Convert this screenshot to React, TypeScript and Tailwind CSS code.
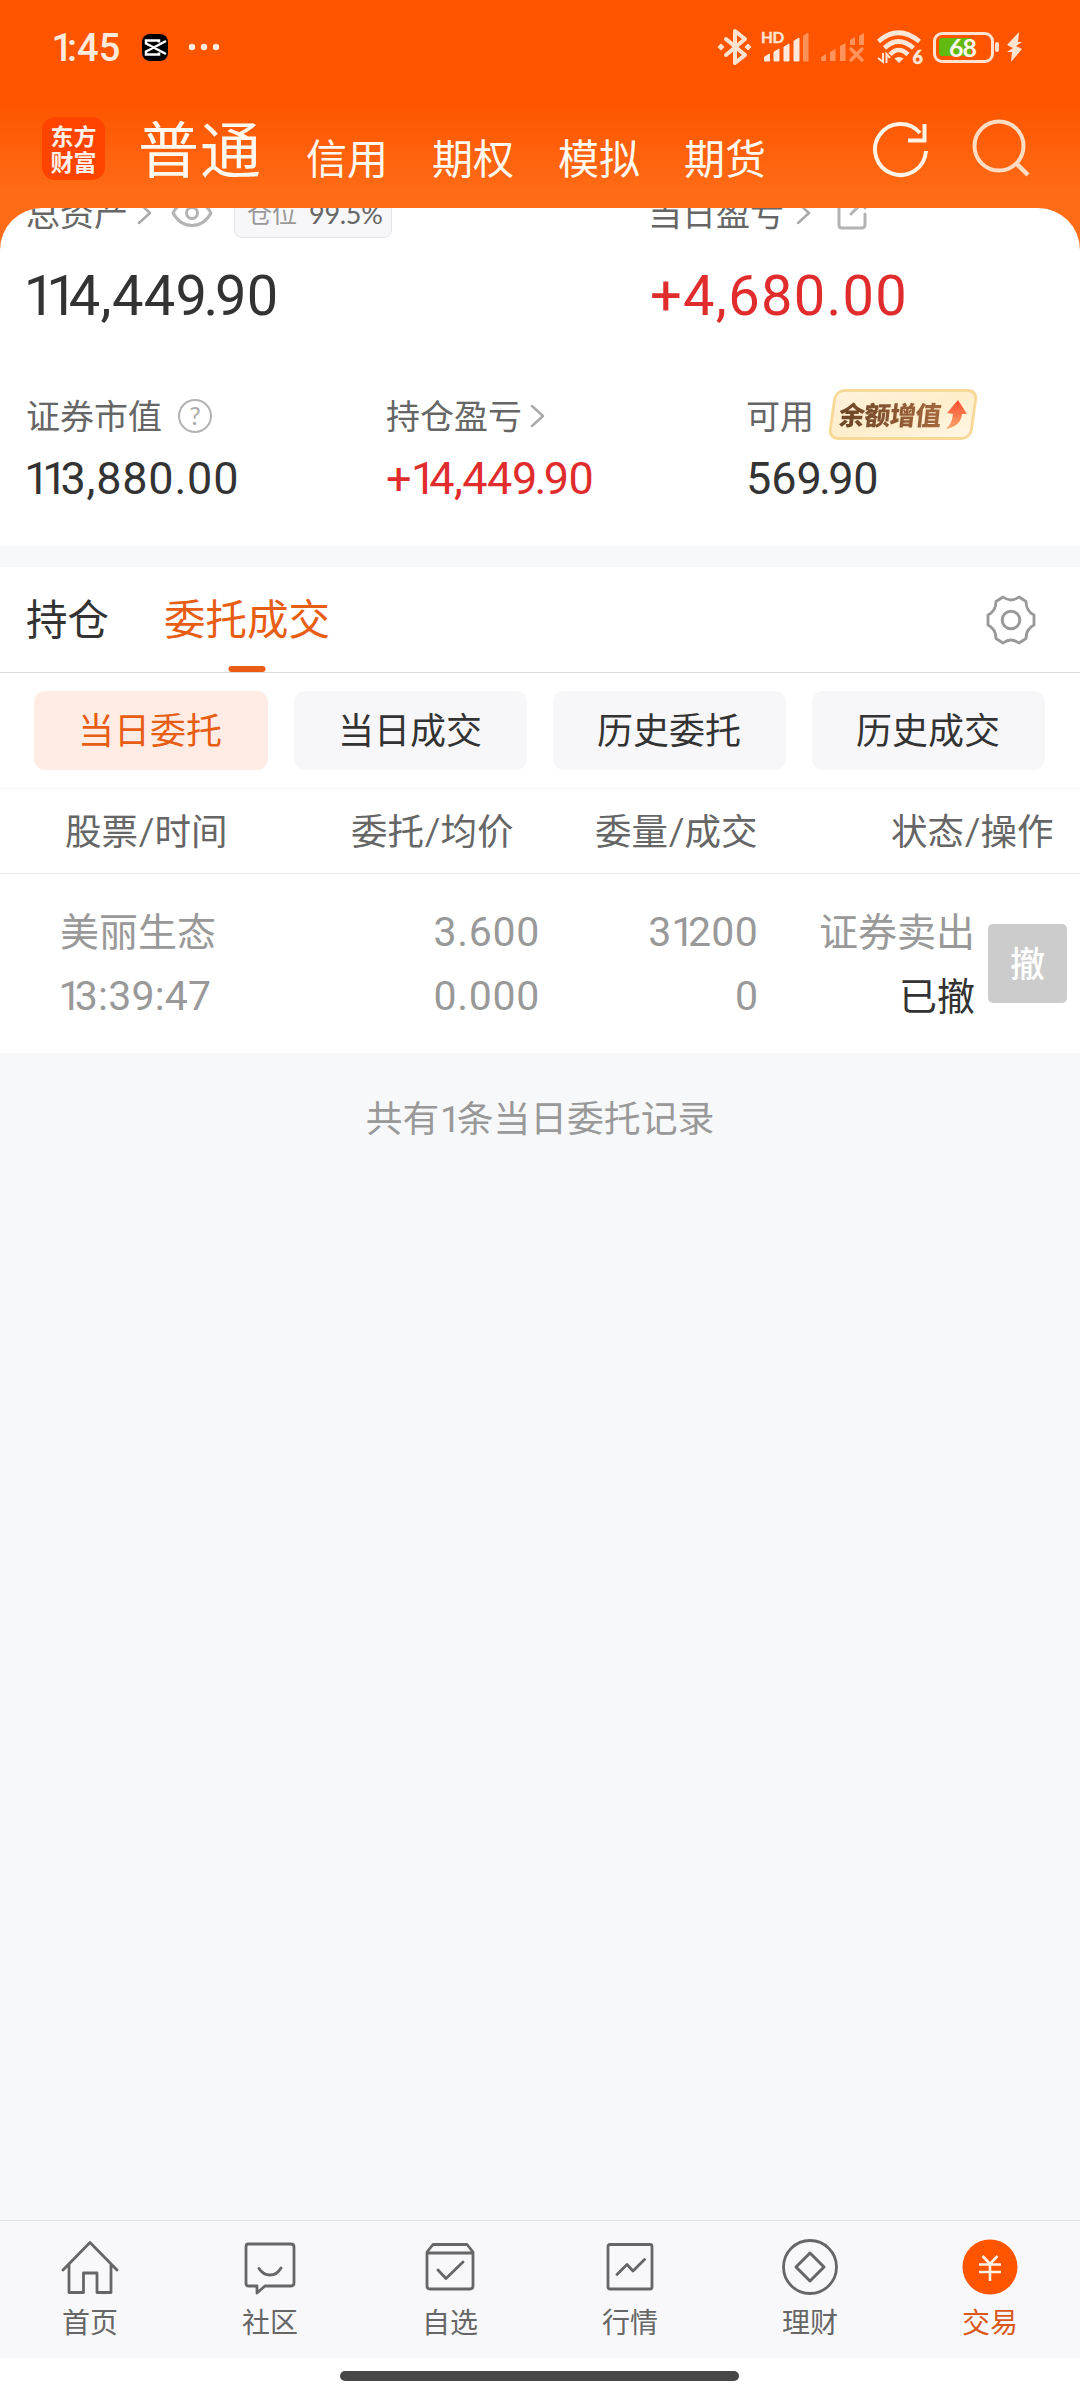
import type { ReactNode } from "react";

const stroke = { fill: "none", strokeLinecap: "round", strokeLinejoin: "round" } as const;

/** A number in proportional figures: "1" and the pairs round a "9." are set tighter. */
function Figure({ value, className = "" }: { value: string; className?: string }) {
  return (
    <span className={`font-['Roboto','Noto_Sans_CJK_SC',sans-serif] ${className}`}>
      {(value.match(/1|9\.(?=9)|[^19]+|9/g) ?? []).map((part, i) => (
        <span
          key={i}
          className={part === "1" ? (i === 0 ? "-ml-[0.04em] tracking-[-0.16em]" : "tracking-[-0.16em]") : part === "9." ? "tracking-[-0.06em]" : ""}
        >
          {part}
        </span>
      ))}
    </span>
  );
}

function Chevron({ className = "" }: { className?: string }) {
  return (
    <svg className={className} width="16" height="26" viewBox="0 0 16 26" {...stroke} stroke="#aaa" strokeWidth="2.5">
      <path d="M2 3 13 13 2 23" />
    </svg>
  );
}

function StatusBar() {
  return (
    <div className="flex h-[94px] items-center pl-[53px]">
      <Figure value="1:45" className="w-[89px] pt-[1px] text-[38px] font-medium leading-none text-[#ffeadb]" />
      <svg width="26" height="27" viewBox="0 0 26 27">
        <rect width="26" height="27" rx="8" fill="#000" />
        <path d="M24 7 8 15.500M24 20 8 11.500M17 8.500V6.500H4V9.500L9 12M17 18.500V20.500H4V17.500L9 15" fill="none" stroke="#fff" strokeWidth="2.500" />
      </svg>
      <svg className="ml-[20px]" width="32" height="8" viewBox="0 0 32 8" fill="#ffeadb">
        <circle cx="4" cy="4" r="3.200" />
        <circle cx="16" cy="4" r="3.200" />
        <circle cx="28" cy="4" r="3.200" />
      </svg>
      <div className="ml-auto mr-[57px] flex items-center">
        <svg width="36" height="40" viewBox="0 0 36 40" {...stroke} stroke="#ffe3d0" strokeWidth="4">
          <path d="M9 12 28 28 18 36V4L28 12 9 28" />
          <path d="M4 17.500 6.500 20 4 22.500 1.500 20ZM31 17.500 33.500 20 31 22.500 28.500 20Z" fill="#ffe3d0" strokeWidth="1.500" />
        </svg>
        <div className="relative ml-[9px] h-[40px] w-[50px]">
          <span className="absolute left-[-1px] top-[3px] text-[15.500px] font-bold leading-none tracking-[-0.5px] text-[#ffe3d0] [-webkit-text-stroke:0.400px_#ffe3d0]">HD</span>
          <svg width="50" height="40" viewBox="0 0 50 40" fill="#ffe9dc">
            <path d="M2.500 34V30L7.500 27V34ZM12 34V25L17 22V34ZM22 34V20L27 17V34ZM32 34V14L37 11V34Z" stroke="#ffe9dc" strokeLinejoin="round" />
            <path d="M41.500 34V9L46 6V34Z" opacity=".4" stroke="#ffe9dc" strokeLinejoin="round" />
          </svg>
        </div>
        <svg className="ml-[8px]" width="48" height="40" viewBox="0 0 48 40" fill="#ff935c">
          <path d="M1 34V30L6 27V34ZM10 34V25L15.500 22V34ZM20 34V19L25.500 16V34ZM30 18V13L35 10V18ZM39 18V9L44 6V18Z" />
          <path d="M31 22 42 33M42 22 31 33" stroke="#ff935c" strokeWidth="3.500" strokeLinecap="round" />
        </svg>
        <div className="relative ml-[8px] h-[40px] w-[46px]">
          <svg width="46" height="40" viewBox="0 0 46 40" fill="none" stroke="#ffe6d6" strokeWidth="4.600">
            <path d="M2.500 14.500Q22-3 43.500 14.500M8.500 21Q22 8 37.500 21M14 27.500Q22.500 18.500 32 27.500" />
            <path d="M19 31.500Q22.500 29.500 27 31.500L23 35.500Z" fill="#ffe6d6" strokeWidth="1" />
            <path d="M7 26V35L2 31M10.500 36V27L14 31" strokeWidth="2" />
          </svg>
          <span className="absolute bottom-[1px] right-[-1px] text-[18px] font-black leading-none text-[#ffe6d6] [-webkit-text-stroke:0.500px_#ffe6d6]">6</span>
        </div>
        <div className="relative ml-[11px] h-[31px] w-[67px]">
          <svg width="67" height="31" viewBox="0 0 67 31">
            <rect x="1.500" y="1.500" width="58" height="28" rx="7.500" fill="none" stroke="#ffe3d0" strokeWidth="3" />
            <path d="M9 6H38V24H9Q6 24 6 21V9Q6 6 9 6Z" fill="#62b90f" />
            <rect x="62" y="10" width="4" height="10" rx="2" fill="#ffe3d0" />
          </svg>
          <span className="absolute left-[16px] top-[3px] text-[25px] font-bold leading-none tracking-[-1px] text-[#fff6ee]">68</span>
        </div>
        <svg className="ml-[6px]" width="17" height="32" viewBox="0 0 17 32" fill="#ffe3d0">
          <path d="M13 1 1 14 7 17 1 21H6L5 31 16 18 10 15 16 11H12Z" />
        </svg>
      </div>
    </div>
  );
}

function Header() {
  return (
    <div className="flex h-[114px] items-start pl-[42px] text-[#fff8ee]">
      <div className="mt-[23px] flex h-[63px] w-[63px] flex-col items-center justify-center rounded-[13px] bg-[#ff4400] text-[23px] font-bold leading-[26px] text-[#fff0e8]">
        <span>东方</span>
        <span>财富</span>
      </div>
      <span className="ml-[33px] mt-[25px] text-[61px] leading-none tracking-[1px]">普通</span>
      <nav className="ml-[44px] mt-[44px] flex gap-[44px] text-[41px] leading-none">
        {["信用", "期权", "模拟", "期货"].map((t) => (
          <span key={t}>{t}</span>
        ))}
      </nav>
      <svg className="ml-[106px] mt-[26px]" width="58" height="60" viewBox="0 0 58 60" fill="none" stroke="#fff4e6" strokeWidth="4">
        <path d="M54 31A25.500 25.500 0 1 1 48 13" />
        <path d="M52.500 4V20.500H36" />
      </svg>
      <svg className="ml-[41px] mt-[25px]" width="60" height="62" viewBox="0 0 60 62" fill="none" stroke="#ffdcc2" strokeWidth="4">
        <circle cx="28" cy="27" r="24.500" />
        <path d="M45 44 57 56" strokeWidth="4.500" />
      </svg>
    </div>
  );
}

function Assets() {
  return (
    <section className="h-[338px] overflow-hidden rounded-t-[42px] bg-white pl-[26px] text-[#333]">
      <div className="-mt-[20px] flex h-[50px] items-center text-[34px] leading-none text-[#666]">
        <span>总资产</span>
        <Chevron className="ml-[9px]" />
        <svg className="ml-[18px]" width="42" height="30" viewBox="0 0 42 30" {...stroke} stroke="#b3b3b3" strokeWidth="3">
          <path d="M2 15Q9 2.500 21 2.500T40 15Q33 27.500 21 27.500T2 15Z" />
          <circle cx="21" cy="15" r="5.500" />
        </svg>
        <span className="ml-[21px] flex h-[50px] w-[158px] items-center rounded-[8px] border border-[#e4e4e8] bg-[#f7f7fa] pl-[12px] text-[25px] text-[#999]">
          仓位<span className="ml-[12px] text-[27px] tracking-[-0.3px] text-[#666]">99.5%</span>
        </span>
        <span className="ml-[256px]">当日盈亏</span>
        <Chevron className="ml-[12px]" />
        <svg className="ml-[25px]" width="30" height="34" viewBox="0 0 30 34" {...stroke} stroke="#b3b3b3" strokeWidth="3">
          <path d="M14 5H5Q2 5 2 8V29Q2 32 5 32H24Q28 32 28 29V18M14 18 28 4M19 4H28V12" />
        </svg>
      </div>
      <div className="flex h-[114px] items-center pt-[2px] text-[56px] leading-none">
        <Figure value="114,449.90" className="w-[624px] tracking-[0.300px]" />
        <Figure value="+4,680.00" className="tracking-[1.300px] text-[#e02c2c]" />
      </div>
      <div className="grid h-[126px] grid-cols-[360px_360px_1fr] pt-[1px] text-[34px] leading-none text-[#666]">
        <div className="flex items-center">
          证券市值
          <span className="ml-[16px] flex h-[34px] w-[34px] items-center justify-center rounded-full border-2 border-[#b3b3b3] text-[25px] text-[#aaa]">?</span>
        </div>
        <div className="flex items-center">
          持仓盈亏
          <Chevron className="ml-[8px]" />
        </div>
        <div className="flex items-center">
          可用
          <span className="relative -top-px ml-[14px] flex h-[51px] w-[150px] items-center pl-[11px]">
            <span className="absolute inset-x-[3px] inset-y-0 -skew-x-[8deg] rounded-[10px] border-[3px] border-[#f8d998] bg-gradient-to-br from-[#fff3dc] via-[#ffeecb] to-[#fff6e4]" />
            <span className="relative -skew-x-[6deg] bg-gradient-to-r from-[#6d4527] to-[#a5683c] bg-clip-text text-[26px] font-black tracking-[-0.5px] text-transparent">余额增值</span>
            <svg className="relative ml-[4px]" width="22" height="31" viewBox="0 0 22 31">
              <defs>
                <linearGradient id="rise" x1="0" y1="0" x2="0" y2="1">
                  <stop offset="0" stopColor="#ff4a2e" />
                  <stop offset="1" stopColor="#f7a66b" />
                </linearGradient>
              </defs>
              <path d="M13 1 22 15H17Q16 27 1 30Q7 25 8 15L2 14Z" fill="url(#rise)" />
            </svg>
          </span>
        </div>
      </div>
      <div className="-mt-[22px] grid grid-cols-[360px_360px_1fr] text-[45px] leading-none">
        <Figure value="113,880.00" className="tracking-[0.800px]" />
        <Figure value="+14,449.90" className="tracking-[-0.500px] text-[#e02c2c]" />
        <Figure value="569.90" className="tracking-[-0.100px]" />
      </div>
    </section>
  );
}

function Orders() {
  return (
    <section className="mt-[21px] bg-white text-[#333]">
      <div className="flex h-[106px] border-b border-[#dcdcdc] pl-[26px] text-[41.500px] leading-[105px]">
        <span>持仓</span>
        <span className="relative ml-[55px] text-[#e85d14]">
          委托成交
          <span className="absolute bottom-0 left-1/2 h-[6px] w-[37px] -translate-x-1/2 rounded-[3px] bg-[#eb5d14]" />
        </span>
        <svg className="ml-auto mr-[43px] mt-[27px]" width="52" height="52" viewBox="0 0 52 52" {...stroke} stroke="#999" strokeWidth="2.800">
          <circle cx="26" cy="26" r="8.800" strokeWidth="3" />
          <path d="M18 3Q26 9 34 3L41 7.500Q41 17 49 21V31Q41 35 41 44.500L34 49Q26 43 18 49L11 44.500Q11 35 3 31V21Q11 17 11 7.500Z" />
        </svg>
      </div>
      <div className="flex h-[116px] gap-[26px] border-b border-[#f5f5f5] pl-[34px] pr-[35px] pt-[18px] text-[36px] leading-[78px]">
        {["当日委托", "当日成交", "历史委托", "历史成交"].map((t, i) => (
          <span
            key={t}
            className={
              i === 0
                ? "h-[79px] flex-1 rounded-[11px] bg-[#ffede5] pr-[2px] text-center text-[#e85d14]"
                : "h-[79px] flex-1 rounded-[11px] bg-[#f7f7fa] pr-[1px] text-center"
            }
          >
            {t}
          </span>
        ))}
      </div>
      <div className="flex h-[85px] border-b border-[#ebebeb] pl-[65px] text-[36.500px] leading-[84px] text-[#666]">
        <span className="w-[286px]">股票/时间</span>
        <span className="w-[244px]">委托/均价</span>
        <span className="w-[296px]">委量/成交</span>
        <span>状态/操作</span>
      </div>
      <div className="flex h-[179px] pl-[60px] pt-[25px] text-[39px] leading-[64px] text-[#999]">
        <div className="flex w-[200px] flex-col">
          <span>美丽生态</span>
          <Figure value="13:39:47" className="relative top-px text-[41px] tracking-[0.200px]" />
        </div>
        <div className="flex w-[280px] flex-col pt-px text-right text-[41px] tracking-[0.700px]">
          <Figure value="3.600" />
          <Figure value="0.000" />
        </div>
        <div className="flex w-[218px] flex-col pt-px text-right text-[41px]">
          <Figure value="31200" className="tracking-[0.300px]" />
          <Figure value="0" />
        </div>
        <div className="flex w-[217px] flex-col text-right">
          <span>证券卖出</span>
          <span className="text-[38px] text-[#333]">已撤</span>
        </div>
        <div className="ml-[13px] mt-[25px] h-[79px] w-[79px] rounded-[5px] bg-[#ccc] text-center text-[35px] font-medium leading-[78px] text-white">撤</div>
      </div>
    </section>
  );
}

const tabs: { label: string; icon: ReactNode }[] = [
  { label: "首页", icon: <path d="M3 31 30 3.500 57 31M9 25V53.500H23.500V34H37V53.500H51V25" /> },
  {
    label: "社区",
    icon: <path d="M8 5H51Q54 5 54 8V44Q54 47 51 47H25L17 54V47H8Q6 47 6 44V8Q6 5 8 5ZM19 29.500Q23 36 30 36T41 29" />,
  },
  {
    label: "自选",
    icon: <path d="M7 13 13 5.500H47L53 13V47Q53 50 50 50H10Q7 50 7 47ZM7 14H53M18 31 26 39.500 43 23" />,
  },
  {
    label: "行情",
    icon: <path d="M10 5.500H50Q52 5.500 52 7.500V48Q52 50 50 50H10Q8 50 8 48V7.500Q8 5.500 10 5.500ZM17 35.500 27 25.500 33 32 44.500 20.500" />,
  },
  {
    label: "理财",
    icon: (
      <>
        <circle cx="30" cy="28" r="26.500" />
        <path d="M30 14 44 28 30 42 16 28Z" strokeWidth="3" />
      </>
    ),
  },
  {
    label: "交易",
    icon: (
      <>
        <circle cx="30" cy="28" r="27.500" fill="#ff5500" stroke="none" />
        <path d="M22.500 17 30 25 37.500 17M30 25V42M19 25.500H41M19 33H41" stroke="#fff3e8" strokeWidth="2.600" strokeLinecap="butt" />
      </>
    ),
  },
];

export default function App() {
  return (
    <div className="flex h-[2400px] w-[1080px] flex-col overflow-hidden bg-[#f7f8fa] font-['Lato','Noto_Sans_CJK_SC',sans-serif]">
      <div className="h-[546px] bg-[linear-gradient(180deg,#ff5500_0px,#ff5500_105px,#ff6c17_195px,#ff6c17_100%)]">
        <StatusBar />
        <Header />
        <Assets />
      </div>
      <Orders />
      <p className="mt-[41px] text-center text-[36.800px] leading-[48px] text-[#999]">
        共有<Figure value="1" className="pl-[2px] pr-[2px]" />条当日委托记录
      </p>
      <nav className="mt-auto grid h-[138px] grid-cols-6 border-t border-[#e0e3e5] bg-[#f8f8fa] pt-[18px]">
        {tabs.map((t, i) => (
          <div key={t.label} className="flex flex-col items-center">
            <svg width="60" height="58" viewBox="0 0 60 58" {...stroke} stroke="#666" strokeWidth="2.800">
              {t.icon}
            </svg>
            <span className={i === 5 ? "mt-[11px] text-[28px] leading-none text-[#d9581a]" : "mt-[11px] text-[28px] leading-none text-[#666]"}>{t.label}</span>
          </div>
        ))}
      </nav>
      <div className="flex h-[42px] justify-center bg-white pr-[1px] pt-[13px]">
        <div className="h-[10px] w-[399px] rounded-full bg-[#474747]" />
      </div>
    </div>
  );
}
